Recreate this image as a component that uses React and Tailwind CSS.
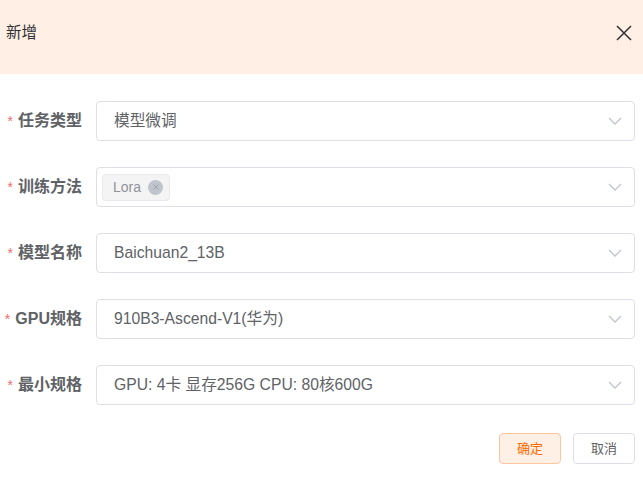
import React from 'react';

const font = { fontFamily: '"Liberation Sans", "Noto Sans CJK SC", sans-serif' };

function Chevron() {
    return (
        <svg width="14" height="8" viewBox="0 0 14 8" fill="none" className="shrink-0">
            <path d="M1 1l6 6 6-6" stroke="#c0c4cc" strokeWidth="1.3" />
        </svg>
    );
}

function Row({ label, children }) {
    return (
        <div className="flex items-center h-10 mb-[26px]">
            <div className="w-[96px] pr-[14px] flex justify-end items-center text-[16px] font-bold text-[#606266]">
                <span className="text-[#f56c6c] mr-[5px] text-[14px] font-normal">*</span>
                {label}
            </div>
            <div className="flex-1 h-10 mr-[8px] border border-[#dcdfe6] rounded-[4px] flex items-center pl-[17px] pr-[12px] bg-white">
                <div className="flex-1 flex items-center text-[15.7px] text-[#606266]">{children}</div>
                <Chevron />
            </div>
        </div>
    );
}

export default function App() {
    return (
        <div className="w-[643px] h-[494px] bg-white" style={font}>
            <div className="h-[74px] bg-[#ffefe5] flex items-center justify-between pl-[6px] pr-[11px] pb-[8px]">
                <span className="text-[15.5px] text-[#303133]">新增</span>
                <svg width="16" height="16" viewBox="0 0 16 16" fill="none">
                    <path d="M1 1l14 14M15 1L1 15" stroke="#303133" strokeWidth="1.5" />
                </svg>
            </div>
            <div className="pt-[27px]">
                <Row label="任务类型">模型微调</Row>
                <Row label="训练方法">
                    <div className="-ml-[12px] h-[27px] pl-[10px] pr-[6px] flex items-center gap-[7px] bg-[#f4f4f5] border border-[#e9e9eb] rounded-[4px] text-[14px] text-[#909399]">
                        Lora
                        <span className="w-[15px] h-[15px] rounded-full bg-[#c0c4cc] flex items-center justify-center">
                            <svg width="8" height="8" viewBox="0 0 8 8">
                                <path d="M1.5 1.5l5 5M6.5 1.5l-5 5" stroke="#a0a4ab" strokeWidth="1" />
                            </svg>
                        </span>
                    </div>
                </Row>
                <Row label="模型名称">Baichuan2_13B</Row>
                <Row label="GPU规格">910B3-Ascend-V1(华为)</Row>
                <Row label="最小规格">GPU: 4卡 显存256G CPU: 80核600G</Row>
                <div className="flex justify-end gap-[12px] pr-[8px] pt-[2px]">
                    <button className="w-[62px] h-[31px] rounded-[4px] border border-[#ffc59e] bg-[#fff0e6] text-[13px] text-[#ff6a00]">
                        确定
                    </button>
                    <button className="w-[62px] h-[31px] rounded-[4px] border border-[#dcdfe6] bg-white text-[13px] text-[#606266]">
                        取消
                    </button>
                </div>
            </div>
        </div>
    );
}
